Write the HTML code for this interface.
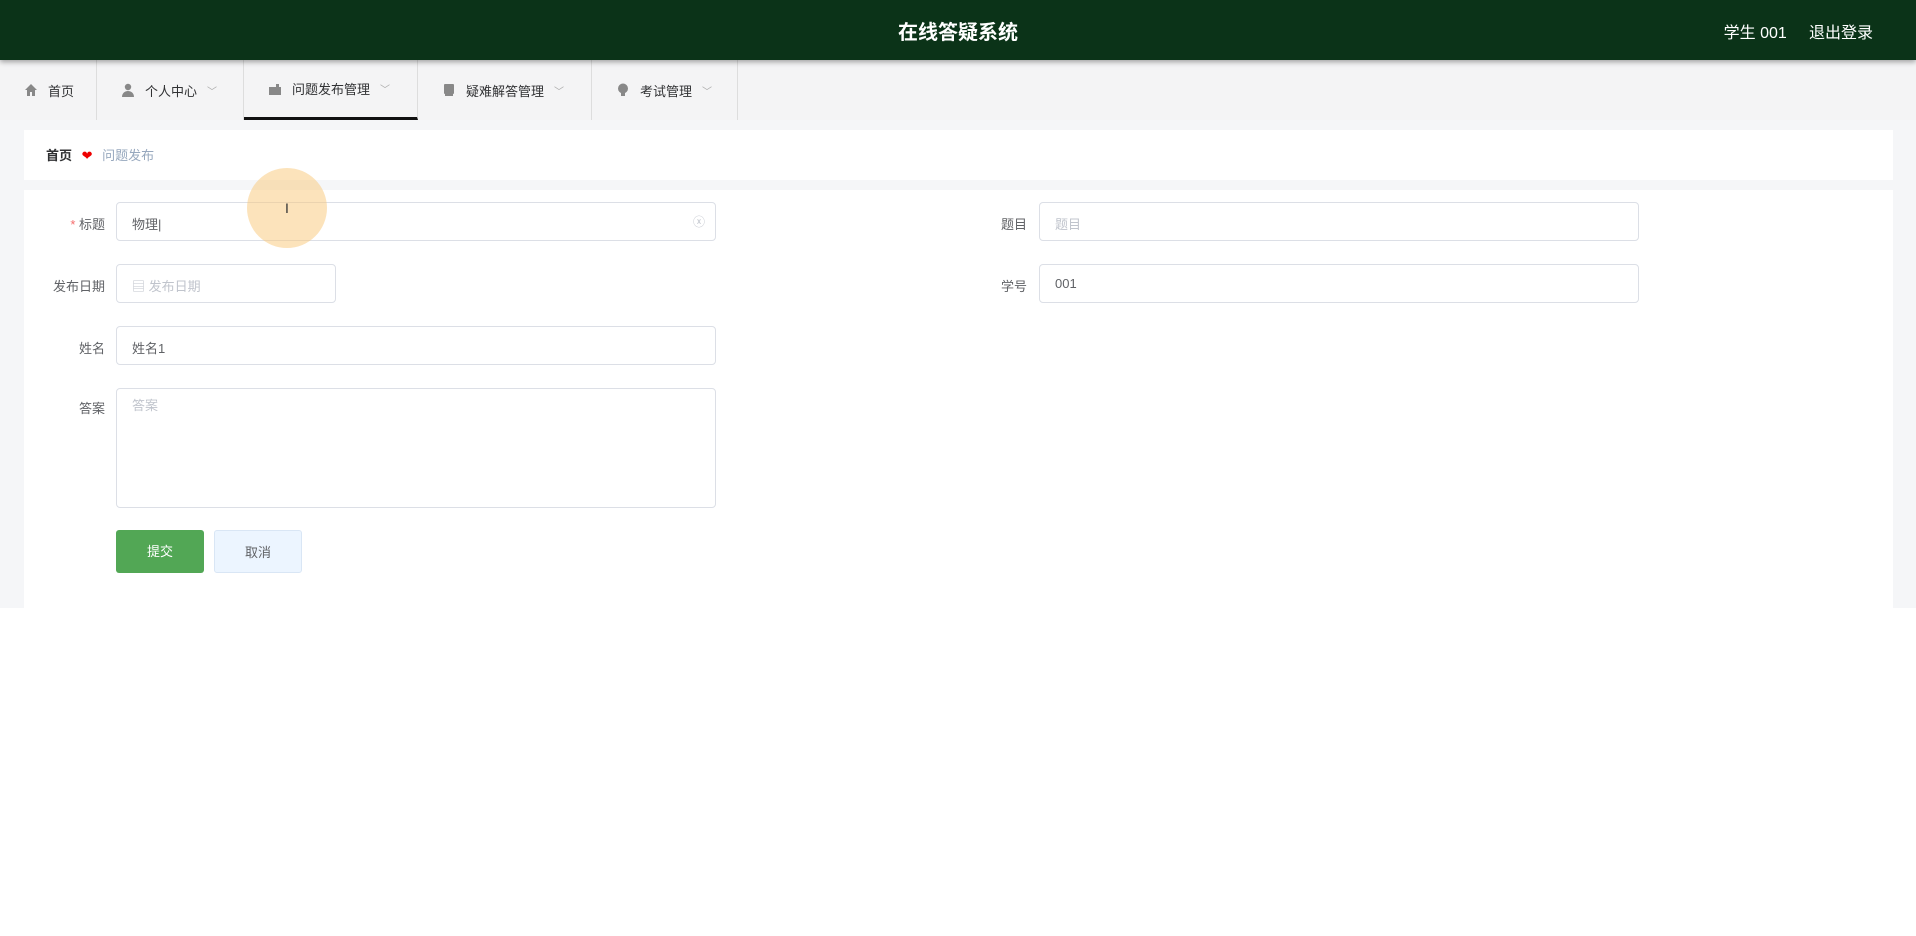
<!DOCTYPE html>
<html><head><meta charset="utf-8"><style>
*{box-sizing:border-box;margin:0;padding:0}
body{width:1916px;height:936px;background:#fff;font-family:"Liberation Sans","Noto Sans CJK SC",sans-serif;position:relative;overflow:hidden;color:#606266}
.hdr{position:absolute;left:0;top:0;width:1916px;height:60px;background:#0b3318;box-shadow:0 2px 5px rgba(0,0,0,.35);z-index:2}
.hdr .t{position:absolute;left:0;width:100%;top:16px;text-align:center;color:#fff;font-size:20px;font-weight:bold}
.hdr .r{position:absolute;right:43px;top:19px;color:#fff;font-size:16px}
.nav{position:absolute;top:60px;left:0;width:1916px;height:60px;background:#f4f4f5}
.tab{position:absolute;top:0;height:60px;border-right:1px solid #ddd;font-size:13px;color:#303133;display:flex;align-items:center;padding-left:24px}
.tab svg{margin-right:10px}
.tab .ar{margin-left:10px;color:#aaa;font-size:10px}
.act{border-bottom:3px solid #111}
.main{position:absolute;top:120px;left:0;width:1916px;height:488px;background:#f5f6f8}
.bc{position:absolute;left:24px;top:10px;width:1869px;height:50px;background:#fff;font-size:13px;padding:15px 0 0 22px}
.card{position:absolute;left:24px;top:70px;width:1869px;height:418px;background:#fff}
.lbl{position:absolute;font-size:13px;color:#606266;text-align:right;width:90px}
.inp{position:absolute;border:1px solid #dcdfe6;border-radius:4px;height:39px;font-size:13px;padding:11px 0 0 15px;color:#606266;background:#fff}
.ph{color:#c0c4cc}
.btn{position:absolute;top:530px;height:43px;width:88px;border-radius:3px;font-size:13px;text-align:center;line-height:43px}
</style></head><body>
<div class="hdr"><div class="t">在线答疑系统</div><div class="r">学生 001&nbsp;&nbsp;&nbsp;&nbsp;&nbsp;退出登录</div></div>
<div class="nav">
<div class="tab" style="left:0;width:97px"><svg width="14" height="14" viewBox="0 0 14 14"><path d="M7 1L1 7h2v6h3V9h2v4h3V7h2z" fill="#888"/></svg>首页</div>
<div class="tab" style="left:97px;width:147px"><svg width="14" height="14" viewBox="0 0 14 14"><circle cx="7" cy="4" r="3.2" fill="#888"/><path d="M1 14c0-4 3-6 6-6s6 2 6 6z" fill="#888"/></svg>个人中心<span class="ar">﹀</span></div>
<div class="tab act" style="left:244px;width:174px"><svg width="14" height="14" viewBox="0 0 14 14"><rect x="1" y="5" width="12" height="8" fill="#888"/><rect x="8" y="2" width="3" height="4" fill="#888"/></svg>问题发布管理<span class="ar">﹀</span></div>
<div class="tab" style="left:418px;width:174px"><svg width="14" height="14" viewBox="0 0 14 14"><rect x="2" y="1" width="10" height="10" rx="1" fill="#888"/><rect x="3" y="11" width="8" height="2" fill="#888"/></svg>疑难解答管理<span class="ar">﹀</span></div>
<div class="tab" style="left:592px;width:146px"><svg width="14" height="14" viewBox="0 0 14 14"><ellipse cx="7" cy="5.5" rx="5" ry="5" fill="#888"/><rect x="5" y="10" width="4" height="3" fill="#888"/></svg>考试管理<span class="ar">﹀</span></div>
</div>
<div class="main">
<div class="bc"><b style="color:#303133">首页</b> <span style="color:#e00;margin:0 6px">❤</span> <span style="color:#97a8be">问题发布</span></div>
<div class="card"></div>
</div>
<div class="lbl" style="left:15px;top:214px"><span style="color:#f56c6c">* </span>标题</div>
<div class="inp" style="left:116px;top:202px;width:600px">物理|<span style="position:absolute;right:10px;top:10px;color:#c0c4cc;font-size:12px">ⓧ</span></div>
<div class="lbl" style="left:15px;top:276px">发布日期</div>
<div class="inp" style="left:116px;top:264px;width:220px"><span class="ph">▤ 发布日期</span></div>
<div class="lbl" style="left:15px;top:338px">姓名</div>
<div class="inp" style="left:116px;top:326px;width:600px">姓名1</div>
<div class="lbl" style="left:15px;top:398px">答案</div>
<div class="inp" style="left:116px;top:388px;width:600px;height:120px;padding-top:6px"><span class="ph">答案</span></div>
<div class="lbl" style="left:937px;top:214px">题目</div>
<div class="inp" style="left:1039px;top:202px;width:600px"><span class="ph">题目</span></div>
<div class="lbl" style="left:937px;top:276px">学号</div>
<div class="inp" style="left:1039px;top:264px;width:600px">001</div>
<div class="btn" style="left:116px;background:#52a755;color:#fff">提交</div>
<div class="btn" style="left:214px;background:#ecf5ff;border:1px solid #d9e6f5;color:#606266">取消</div>
<div style="position:absolute;left:247px;top:168px;width:80px;height:80px;border-radius:50%;background:rgba(250,200,120,.5)"></div>
<div style="position:absolute;left:285px;top:200px;font-size:14px;color:#333">I</div>
</body></html>
